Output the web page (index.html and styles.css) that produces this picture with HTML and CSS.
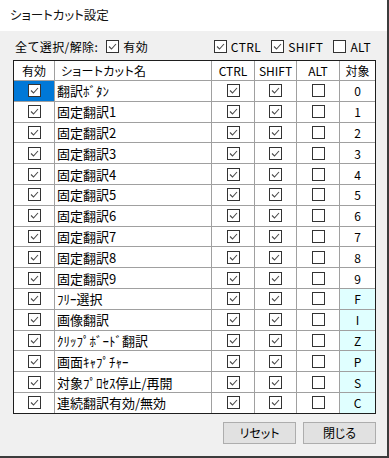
FILE: index.html
```html
<html>
<head>

	<title>ショートカット設定</title>

	<link rel="stylesheet" href="styles.css">

	<script type="text/javascript">

		let rows = [
			['翻訳ﾎﾞﾀﾝ', '0'],
			['固定翻訳1', '1'],
			['固定翻訳2', '2'],
			['固定翻訳3', '3'],
			['固定翻訳4', '4'],
			['固定翻訳5', '5'],
			['固定翻訳6', '6'],
			['固定翻訳7', '7'],
			['固定翻訳8', '8'],
			['固定翻訳9', '9'],
			['ﾌﾘｰ選択', 'F'],
			['画像翻訳', 'I'],
			['ｸﾘｯﾌﾟﾎﾞｰﾄﾞ翻訳', 'Z'],
			['画面ｷｬﾌﾟﾁｬｰ', 'P'],
			['対象ﾌﾟﾛｾｽ停止/再開', 'S'],
			['連続翻訳有効/無効', 'C'],
		];

		const check = '<svg viewBox="0 0 11 11" width="11" height="11"><polyline points="2,5.5 4.5,8 9,3" fill="none" stroke="#4a4a4a" stroke-width="1.1"/></svg>';

		function box(on) {
			return '<span class="cb">' + (on ? check : '') + '</span>';
		}

		function cell(cls, html) {
			const div = document.createElement('div');
			div.setAttribute('class', 'cell ' + cls);
			div.innerHTML = html;
			return div;
		}

		function bootstrap() {
			let grid = document.getElementById('grid');
			for (let i = 0; i < rows.length; i++) {
				let key = rows[i][1];
				grid.appendChild(cell(i == 0 ? 'c sel' : 'c', box(true)));
				grid.appendChild(cell('name', rows[i][0]));
				grid.appendChild(cell('c', box(true)));
				grid.appendChild(cell('c', box(true)));
				grid.appendChild(cell('c', box(false)));
				grid.appendChild(cell(isNaN(key) ? 'c key alpha' : 'c key', key));
			}
			document.querySelectorAll('.opt .cb.on').forEach(function (el) {
				el.innerHTML = check;
			});
		}

	</script>

</head>
<body onload="bootstrap()">

	<div class="window">
		<div class="titlebar">ショートカット設定</div>
		<div class="content">
			<div class="toolbar">
				<div class="group">
					<span class="label">全て選択/解除:</span>
					<span class="opt"><span class="cb on"></span>有効</span>
				</div>
				<div class="group">
					<span class="opt"><span class="cb on"></span>CTRL</span>
					<span class="opt"><span class="cb on"></span>SHIFT</span>
					<span class="opt"><span class="cb"></span>ALT</span>
				</div>
			</div>
			<div id="grid" class="grid">
				<div class="cell head c">有効</div>
				<div class="cell head hname">ショートカット名</div>
				<div class="cell head c">CTRL</div>
				<div class="cell head c">SHIFT</div>
				<div class="cell head c">ALT</div>
				<div class="cell head c">対象</div>
			</div>
			<div class="buttons">
				<button type="button" class="button">リセット</button>
				<button type="button" class="button">閉じる</button>
			</div>
		</div>
	</div>

</body>
</html>
```

FILE: styles.css
```css
body {
	margin: 0;
	padding: 0;
	background: #f0f0f0;
	font-family: "Noto Sans CJK JP", "Liberation Sans", sans-serif;
	font-size: 12px;
	color: black;
}
.window {
	width: 387px;
	height: 456px;
	border-right: 2px solid #3c3c3c;
	border-bottom: 2px solid #3c3c3c;
	display: flex;
	flex-direction: column;
}
.titlebar {
	height: 31px;
	background: white;
	padding-left: 10px;
	line-height: 30px;
	font-size: 12.5px;
	font-feature-settings: "palt";
	color: #111;
}
.content {
	flex: 1;
	padding: 0 12px 0 13px;
	border-left: 1px solid #8a8a8a;
	margin-left: -1px;
}
.toolbar {
	height: 28px;
	display: flex;
	justify-content: space-between;
	align-items: center;
	padding-top: 1px;
	letter-spacing: 0.4px;
}
.group {
	display: flex;
	align-items: center;
}
.label {
	margin-left: 2px;
	margin-right: 8px;
}
.opt {
	display: flex;
	align-items: center;
	margin-right: 10px;
}
.group + .group .opt:last-child {
	margin-right: 4px;
}
.opt .cb {
	margin-right: 4px;
}
.cb {
	display: inline-block;
	width: 11px;
	height: 11px;
	border: 1px solid #333;
	background: white;
	line-height: 0;
}
.grid {
	display: grid;
	grid-template-columns: 40px 156px 42px 41px 42px 35px;
	grid-template-rows: 19px;
	grid-auto-rows: 19.8px;
	gap: 1px;
	background: #a0a0a0;
	border: 1px solid #1e1e1e;
	width: 361px;
}
.cell {
	background: white;
	display: flex;
	align-items: center;
	overflow: hidden;
	white-space: nowrap;
}
.c {
	justify-content: center;
}
.head.hname {
	padding-left: 6px;
	font-feature-settings: "palt";
	letter-spacing: 0.3px;
}
.name {
	padding-left: 2px;
	font-size: 13px;
}
.sel {
	background: #0078d7;
}
.key {
	font-family: "Noto Sans CJK JP", sans-serif;
	font-size: 12px;
	font-weight: 400;
}
.alpha {
	background: #e0ffff;
}
.buttons {
	display: flex;
	justify-content: flex-end;
	gap: 7px;
	margin-top: 8px;
	width: 363px;
}
.button {
	width: 73px;
	height: 22px;
	background: #e1e1e1;
	border: 1px solid #adadad;
	font-family: "Noto Sans CJK JP", sans-serif;
	font-size: 12px;
	font-feature-settings: "palt";
	padding: 0;
	color: black;
}
```
